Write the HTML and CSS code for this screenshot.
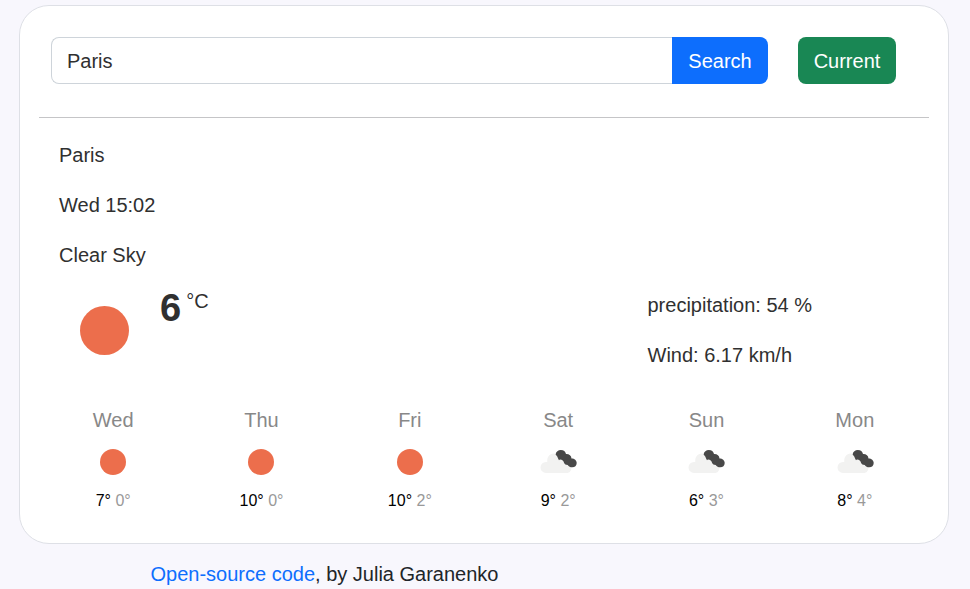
FILE: index.html
```html
<!DOCTYPE html>
<html lang="en">
<head>
  <meta charset="UTF-8">
  <title>Weather App</title>
  <link rel="stylesheet" href="styles.css">
</head>
<body>
  <svg class="sprite" width="0" height="0">
    <symbol id="sun" viewBox="0 0 50 50">
      <circle cx="25" cy="25" r="25" fill="#ec6e4c"/>
    </symbol>
    <symbol id="clouds" viewBox="0 0 37 25">
      <path fill="#f2f2f1" d="M6 23.900a5.300 5.300 0 0 1 0-11h1.300C6.800 8.200 9.400 4.500 13.700 4.500c3 0 5 1.700 6 4.500h4.500c1.500 1.200 2 3 1.800 4.900 3.200.2 5.400 2.300 5.400 5s-1.900 5-4.500 5z"/>
      <path fill="#484848" d="M15.600 5.500C16 2.600 18.200 1 20.800 1c2.800 0 4.900 1.600 5.200 4.100 3-.2 5.300 1.500 5.500 4.300 3 0 5.200 1.900 5.200 4.500s-1.900 4.400-4.400 4.400c-2 0-3.600-.9-4.600-2.400-1.900 0-3-.7-3.600-1.900-.5-2.300-2-3.700-4.200-3.600l-.9.900-.8-1.600c-.6-1.900-1.400-3-2.600-4.200z"/>
    </symbol>
  </svg>

  <div class="weather-app">
    <form class="search-form">
      <input type="text" class="city-input" value="Paris">
      <button type="button" class="btn btn-search">Search</button>
      <button type="button" class="btn btn-current">Current</button>
    </form>
    <hr>

    <div class="overview">
      <p>Paris</p>
      <p>Wed 15:02</p>
      <p>Clear Sky</p>
    </div>

    <div class="today">
      <div class="temperature">
        <svg class="today-icon"><use href="#sun"/></svg>
        <strong>6</strong>
        <span class="units">°C</span>
      </div>
      <div class="details">
        <p>precipitation: 54 %</p>
        <p>Wind: 6.17 km/h</p>
      </div>
    </div>

    <div class="forecast">
      <div class="day">
        <div class="day-name">Wed</div>
        <svg class="icon-sun"><use href="#sun"/></svg>
        <div class="day-temps">7° <span>0°</span></div>
      </div>
      <div class="day">
        <div class="day-name">Thu</div>
        <svg class="icon-sun"><use href="#sun"/></svg>
        <div class="day-temps">10° <span>0°</span></div>
      </div>
      <div class="day">
        <div class="day-name">Fri</div>
        <svg class="icon-sun"><use href="#sun"/></svg>
        <div class="day-temps">10° <span>2°</span></div>
      </div>
      <div class="day">
        <div class="day-name">Sat</div>
        <svg class="icon-clouds"><use href="#clouds"/></svg>
        <div class="day-temps">9° <span>2°</span></div>
      </div>
      <div class="day">
        <div class="day-name">Sun</div>
        <svg class="icon-clouds"><use href="#clouds"/></svg>
        <div class="day-temps">6° <span>3°</span></div>
      </div>
      <div class="day">
        <div class="day-name">Mon</div>
        <svg class="icon-clouds"><use href="#clouds"/></svg>
        <div class="day-temps">8° <span>4°</span></div>
      </div>
    </div>
  </div>

  <footer><a href="#">Open-source code</a>, by Julia Garanenko</footer>
</body>
</html>
```

FILE: styles.css
```css
* {
  box-sizing: border-box;
}
html {
  overflow: hidden;
}
body {
  margin: 0;
  padding: 5px 21px 0 19px;
  background: #f8f7fd;
  color: #303030;
  font-family: Arial, "Liberation Sans", sans-serif;
  font-size: 20px;
  line-height: 30px;
}
.sprite {
  display: block;
}
.weather-app {
  height: 539px;
  padding: 31px 19px 0;
  background: #fff;
  border: 1px solid #dee0e6;
  border-radius: 30px;
}
.search-form {
  display: flex;
  padding: 0 33px 0 12px;
}
.city-input {
  flex: 1;
  min-width: 0;
  height: 47px;
  padding: 2px 15px 0;
  border: 1px solid #ced4da;
  border-right: none;
  border-radius: 8px 0 0 8px;
  color: #303030;
  font: inherit;
}
.btn {
  height: 47px;
  padding: 0;
  border: none;
  color: #fff;
  font: inherit;
}
.btn-search {
  width: 96px;
  background: #0d6efd;
  border-radius: 0 8px 8px 0;
}
.btn-current {
  width: 98px;
  margin-left: 30px;
  background: #198754;
  border-radius: 8px;
}
hr {
  height: 1px;
  margin: 33px 0 22px;
  border: none;
  background: #c5c5c7;
}
p {
  margin: 0 0 20px;
}
.overview {
  padding-left: 20px;
}
.today {
  display: flex;
  justify-content: space-between;
  height: 115px;
}
.temperature {
  display: flex;
  padding-left: 41px;
}
.today-icon {
  width: 49px;
  height: 49px;
  margin-top: 16px;
}
.temperature strong {
  margin: 3px 0 0 31px;
  font-size: 38px;
}
.units {
  margin: -4px 0 0 5px;
}
.details {
  width: 281.5px;
}
.forecast {
  display: grid;
  grid-template-columns: repeat(6, 1fr);
  text-align: center;
}
.day {
  display: flex;
  flex-direction: column;
  align-items: center;
}
.day-name {
  color: #888;
}
.icon-sun {
  width: 26px;
  height: 26px;
  margin: 14px 0;
}
.icon-clouds {
  width: 37px;
  height: 25px;
  margin: 14px 0 15px 1px;
}
.day-temps {
  color: #000;
  font-size: 16px;
  line-height: 24px;
}
.day-temps span {
  color: #999;
}
footer {
  padding: 15px 0 0 131.5px;
  color: #212529;
}
footer a {
  color: #0d6efd;
  text-decoration: none;
}
```
